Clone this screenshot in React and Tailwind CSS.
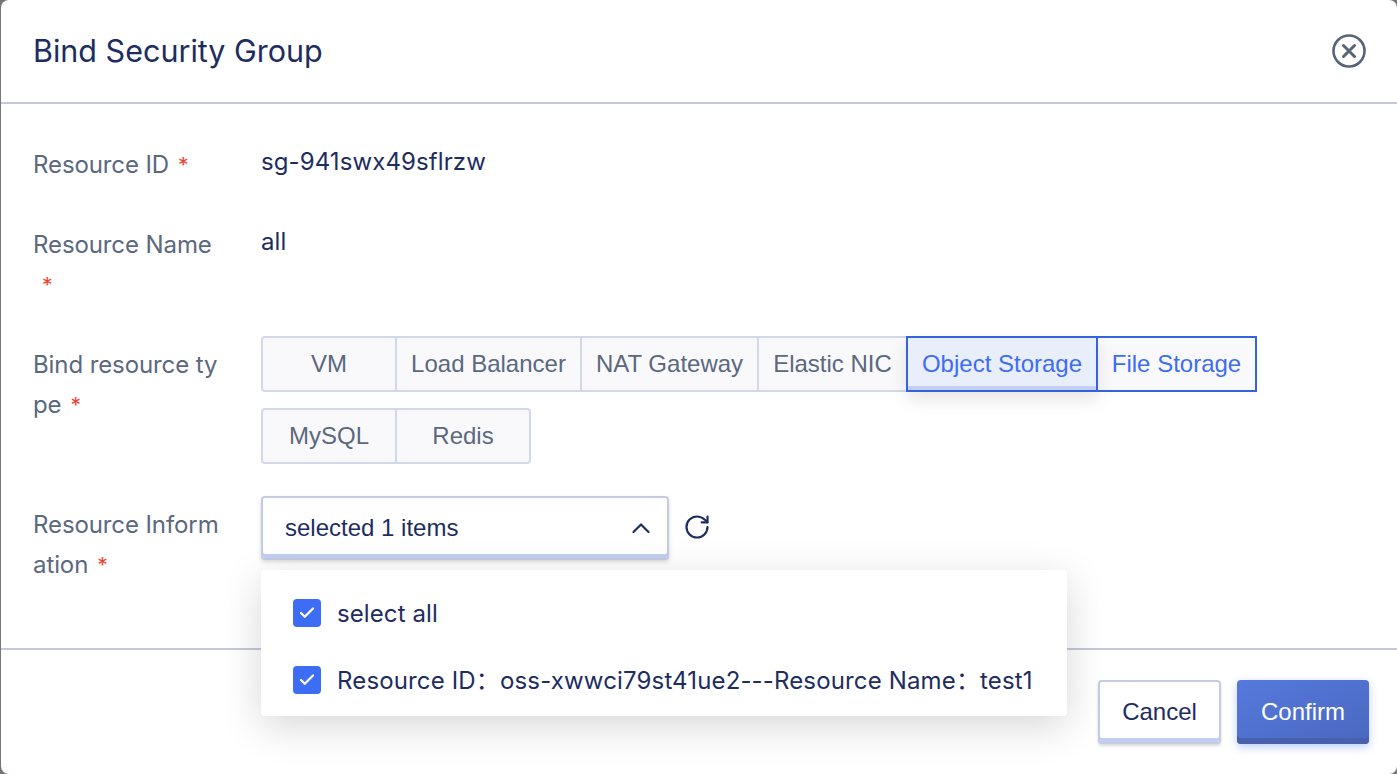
import React from 'react';
import { RotateCw, Check } from 'lucide-react';

const inter = "font-['Inter','Noto_Sans',sans-serif]";

// segmented options, split in two rows like the wrapped original
const rowOne = [
  { label: 'VM', width: 'w-[136px]' },
  { label: 'Load Balancer', width: 'w-[187px]' },
  { label: 'NAT Gateway', width: 'w-[179px]' },
  { label: 'Elastic NIC', width: 'w-[151px]' },
];

function Star() {
  return <span className="inline-block ml-[9px] text-[21px] leading-none text-[#ee4433]">*</span>;
}

function Segment({ label, width, first, last }) {
  return (
    <div
      className={`flex items-center justify-center h-[56px] ${width} -mr-[2px] border-2 border-[#d3d7ea] bg-[#f9f9fc] text-[24px] text-[#5a6880] ${first ? 'rounded-l' : ''} ${last ? 'rounded-r' : ''}`}
    >
      {label}
    </div>
  );
}

function Label({ children }) {
  return (
    <div className={`w-[190px] mr-[38px] pt-[9px] shrink-0 break-all text-[24px] leading-[40px] tracking-[-0.1px] text-[#5a6880] ${inter}`}>
      {children}
    </div>
  );
}

function CheckBox() {
  return (
    <span className="flex items-center justify-center w-[28px] h-[28px] rounded bg-[#3d6cf5] text-white shrink-0">
      <Check size={18} strokeWidth={3} />
    </span>
  );
}

export default function App() {
  return (
    <div className="h-[774px] w-[1397px] overflow-hidden bg-[#777777] pl-px">
      <div className={`relative flex flex-col h-full bg-white rounded-lg text-[#1e2d5f] ${inter}`}>
        {/* HEADER */}
        <div className="flex items-center justify-between h-[104px] pl-[32px] pr-[30px] border-b-2 border-[#c5c8da] shrink-0">
          <h1 className="text-[30.5px] font-normal">Bind Security Group</h1>
          <svg width="36" height="36" viewBox="0 0 36 36" fill="none" stroke="#566378" strokeLinecap="round">
            <circle cx="18" cy="18" r="15.5" strokeWidth="2.6" />
            <path d="M12.5 12.5l11 11M23.5 12.5l-11 11" strokeWidth="3" />
          </svg>
        </div>

        {/* FORM */}
        <div className="flex flex-col gap-8 flex-1 pt-[32px] pl-[32px]">
          <div className="flex h-[48px]">
            <Label>Resource ID<Star /></Label>
            <div className="text-[24px] leading-[52px] tracking-[0.1px]">sg-941swx49sflrzw</div>
          </div>

          <div className="flex h-[88px]">
            <Label>Resource Name<Star /></Label>
            <div className="text-[24px] leading-[52px] tracking-[0.1px]">all</div>
          </div>

          <div className="flex h-[128px]">
            <Label>Bind resource type<Star /></Label>
            <div className="flex flex-col gap-4 font-['Liberation_Sans',Arial,sans-serif]">
              <div className="flex">
                {rowOne.map((o, i) => (
                  <Segment key={o.label} label={o.label} width={o.width} first={i === 0} />
                ))}
                <div className="relative z-10 flex items-center justify-center h-[56px] w-[192px] -mr-[2px] border-2 border-[#3563e0] bg-[#e9eefb] text-[24px] text-[#3d6cf5] shadow-[0_8px_16px_rgba(0,0,0,0.1),inset_0_-4px_0_#c0cff3]">
                  Object Storage
                </div>
                <div className="flex items-center justify-center h-[56px] w-[161px] border-2 border-[#3563e0] bg-[#f9f9fc] text-[24px] text-[#3d6cf5]">
                  File Storage
                </div>
              </div>
              <div className="flex">
                <Segment label="MySQL" width="w-[136px]" first />
                <Segment label="Redis" width="w-[136px]" last />
              </div>
            </div>
          </div>

          <div className="flex">
            <Label>Resource Information<Star /></Label>
            <div className="flex items-center gap-[14px] h-[64px]">
              <div className="flex items-center justify-between w-[408px] h-[64px] pl-[22px] pr-[17px] rounded border-2 border-[#c5cbe0] bg-white text-[24px] font-['Liberation_Sans',Arial,sans-serif] shadow-[0_2px_4px_rgba(0,0,0,0.15),inset_0_-4px_0_#c0cff3]">
                selected 1 items
                <svg width="18" height="10" viewBox="0 0 18 10" fill="none" stroke="currentColor" strokeWidth="2.2" strokeLinecap="round" strokeLinejoin="round">
                  <path d="M1.5 9L9 1.5 16.5 9" />
                </svg>
              </div>
              <RotateCw size={28} strokeWidth={1.9} className="-mt-[2px]" />
            </div>
          </div>
        </div>

        {/* FOOTER */}
        <div className="flex justify-end gap-4 h-[126px] pt-[30px] pr-[28px] border-t-2 border-[#c5c8da] shrink-0 font-['Liberation_Sans',Arial,sans-serif]">
          <button className="w-[123px] h-[64px] rounded border-2 border-[#c5cbe0] bg-white text-[24px] text-[#1e2d5f] shadow-[0_2px_3px_rgba(0,0,0,0.15),inset_0_-4px_0_#c0cff3]">
            Cancel
          </button>
          <button className="w-[132px] h-[64px] rounded bg-gradient-to-br from-[#5679dc] to-[#4a68c0] text-[24px] text-white shadow-[0_3px_8px_rgba(61,108,245,0.35),inset_0_-6px_0_#4761ae]">
            Confirm
          </button>
        </div>

        {/* DROPDOWN */}
        <div className="absolute left-[260px] top-[570px] w-[806px] h-[146px] flex flex-col gap-[39px] pt-[29px] pl-[32px] rounded bg-white text-[24px] tracking-[0.1px] shadow-[0_10px_40px_rgba(0,0,0,0.16)]">
          <div className="flex items-center gap-[16px] h-[28px]">
            <CheckBox />
            <span className="pt-[2px]">select all</span>
          </div>
          <div className="flex items-center gap-[16px] h-[28px] whitespace-nowrap">
            <CheckBox />
            <span className="pt-[2px] tracking-[0.15px] font-['Inter','Noto_Sans_CJK_SC',sans-serif]">Resource ID：oss-xwwci79st41ue2---Resource Name：test1</span>
          </div>
        </div>
      </div>
    </div>
  );
}
